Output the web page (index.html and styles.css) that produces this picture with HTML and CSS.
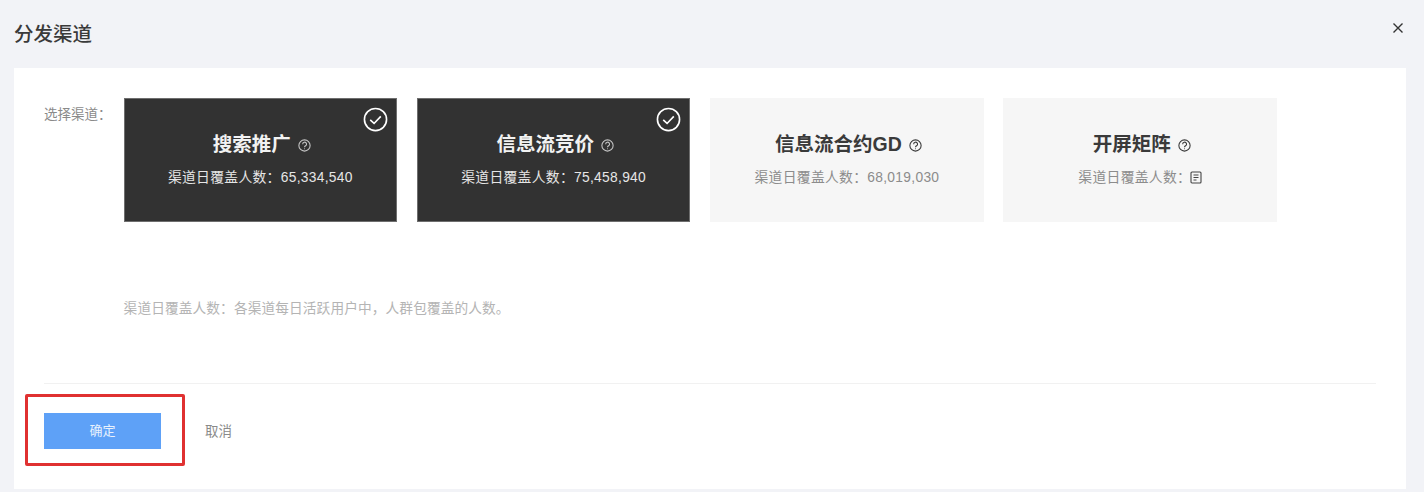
FILE: index.html
```html
<!DOCTYPE html>
<html lang="zh-CN">
<head>
<meta charset="utf-8">
<title>分发渠道</title>
<link rel="stylesheet" href="styles.css">
</head>
<body>
<main class="dialog">
  <header class="dialog-head">
    <h1 class="dialog-title">分发渠道</h1>
    <svg class="close" viewBox="0 0 12 12" aria-label="关闭"><path d="M1.5 1.5l9 9M10.5 1.5l-9 9"/></svg>
  </header>
  <section class="panel">
    <div class="field">
      <div class="field-label">选择渠道：</div>
      <div class="field-body">
        <div class="cards">
          <div class="card card-on">
            <svg class="check" viewBox="0 0 26 26"><circle cx="13" cy="13" r="11.5"/><path d="M7.5 13.5l4 3.6 7-7.4"/></svg>
            <div class="card-title">搜索推广<svg class="help" viewBox="0 0 12 12"><circle cx="6" cy="6" r="5.2"/><path d="M4.3 4.8a1.8 1.8 0 1 1 2.7 1.5c-.7.4-1 .7-1 1.3"/><path class="dot" d="M6 8.7v.7"/></svg></div>
            <div class="card-metric">渠道日覆盖人数：65,334,540</div>
          </div>
          <div class="card card-on">
            <svg class="check" viewBox="0 0 26 26"><circle cx="13" cy="13" r="11.5"/><path d="M7.5 13.5l4 3.6 7-7.4"/></svg>
            <div class="card-title">信息流竞价<svg class="help" viewBox="0 0 12 12"><circle cx="6" cy="6" r="5.2"/><path d="M4.3 4.8a1.8 1.8 0 1 1 2.7 1.5c-.7.4-1 .7-1 1.3"/><path class="dot" d="M6 8.7v.7"/></svg></div>
            <div class="card-metric">渠道日覆盖人数：75,458,940</div>
          </div>
          <div class="card">
            <div class="card-title">信息流合约GD<svg class="help" viewBox="0 0 12 12"><circle cx="6" cy="6" r="5.2"/><path d="M4.3 4.8a1.8 1.8 0 1 1 2.7 1.5c-.7.4-1 .7-1 1.3"/><path class="dot" d="M6 8.7v.7"/></svg></div>
            <div class="card-metric">渠道日覆盖人数：68,019,030</div>
          </div>
          <div class="card">
            <div class="card-title">开屏矩阵<svg class="help" viewBox="0 0 12 12"><circle cx="6" cy="6" r="5.2"/><path d="M4.3 4.8a1.8 1.8 0 1 1 2.7 1.5c-.7.4-1 .7-1 1.3"/><path class="dot" d="M6 8.7v.7"/></svg></div>
            <div class="card-metric">渠道日覆盖人数：<svg class="doc" viewBox="0 0 12 13"><rect x="1" y="1" width="10" height="11" rx="1"/><path d="M3.5 4h5M3.5 6.5h5M3.5 9h3"/></svg></div>
          </div>
        </div>
        <p class="hint">渠道日覆盖人数：各渠道每日活跃用户中，人群包覆盖的人数。</p>
      </div>
    </div>
    <footer class="actions">
      <button class="btn-primary" type="button">确定</button>
      <button class="btn-text" type="button">取消</button>
    </footer>
    <div class="annotation"></div>
  </section>
</main>
</body>
</html>
```
FILE: styles.css
```css
* { box-sizing: border-box; }
html, body { margin: 0; height: 492px; overflow: hidden; }
body {
  background: #f2f3f7;
  color: #333;
  font-family: "Liberation Sans", "Noto Sans CJK SC", sans-serif;
}
.dialog { display: flex; flex-direction: column; height: 489px; padding: 0 18px 0 14px; }
.dialog-head {
  height: 68px;
  flex: none;
  display: flex;
  align-items: center;
  justify-content: space-between;
}
.dialog-title { margin: 0; font-size: 19.5px; line-height: 28px; font-weight: 500; color: #3a3a3a; }
.close {
  width: 12px;
  height: 12px;
  margin: 0 2px 12px 0;
  fill: none;
  stroke: #333;
  stroke-width: 1.4;
}
.panel {
  position: relative;
  flex: 1;
  background: #fff;
  padding: 30px 30px 0;
  display: flex;
  flex-direction: column;
}
.field { display: flex; height: 285px; }
.field-label {
  width: 79.6px;
  flex: none;
  font-size: 13.5px;
  line-height: 33px;
  color: #8a8a8a;
}
.field-body { flex: 1; }
.cards { display: flex; gap: 19.8px; }
.card {
  position: relative;
  width: 273.5px;
  height: 124px;
  background: #f6f6f6;
  display: flex;
  flex-direction: column;
  align-items: center;
  justify-content: center;
  gap: 12px;
  color: #3a3a3a;
}
.card-on { background: #323232; color: #f2f2f2; outline: 1px solid #6e6e6e; outline-offset: -1px; }
.card-title {
  display: flex;
  align-items: center;
  gap: 7px;
  padding-left: 3px;
  font-size: 19.5px;
  line-height: 24px;
  font-weight: 700;
}
.card-metric {
  display: flex;
  align-items: center;
  font-size: 13.8px;
  line-height: 20px;
  letter-spacing: 0.3px;
  color: #8c8c8c;
}
.card-on .card-metric { color: #e6e6e6; }
.help {
  width: 13px;
  height: 13px;
  margin-top: 3px;
  fill: none;
  stroke: currentColor;
  stroke-width: 1;
}
.card-on .help { stroke: #c4c4c4; }
.check {
  position: absolute;
  top: 9px;
  right: 9px;
  width: 25px;
  height: 25px;
  fill: none;
  stroke: #fff;
  stroke-width: 1.7;
}
.doc {
  width: 12px;
  height: 13px;
  margin: -1px 0 0 -1px;
  fill: none;
  stroke: #444;
  stroke-width: 1.1;
}
.hint { margin: 77px 0 0; font-size: 13.7px; line-height: 20px; letter-spacing: 0.1px; color: #b4b4b4; }
.actions {
  border-top: 1px solid #f1f1f1;
  padding-top: 29px;
  display: flex;
  align-items: center;
  gap: 44px;
}
.btn-primary {
  width: 117px;
  height: 36px;
  border: 0;
  padding: 0 0 3px;
  background: #5ea1f7;
  color: #e8f1fd;
  font: inherit;
  font-size: 13px;
}
.btn-text {
  border: 0;
  padding: 0 0 3px;
  background: none;
  color: #8a8a8a;
  font: inherit;
  font-size: 13.5px;
}
.annotation {
  position: absolute;
  left: 11px;
  top: 326px;
  width: 160px;
  height: 72px;
  border: 3px solid #e03131;
  border-radius: 2px;
}
```
